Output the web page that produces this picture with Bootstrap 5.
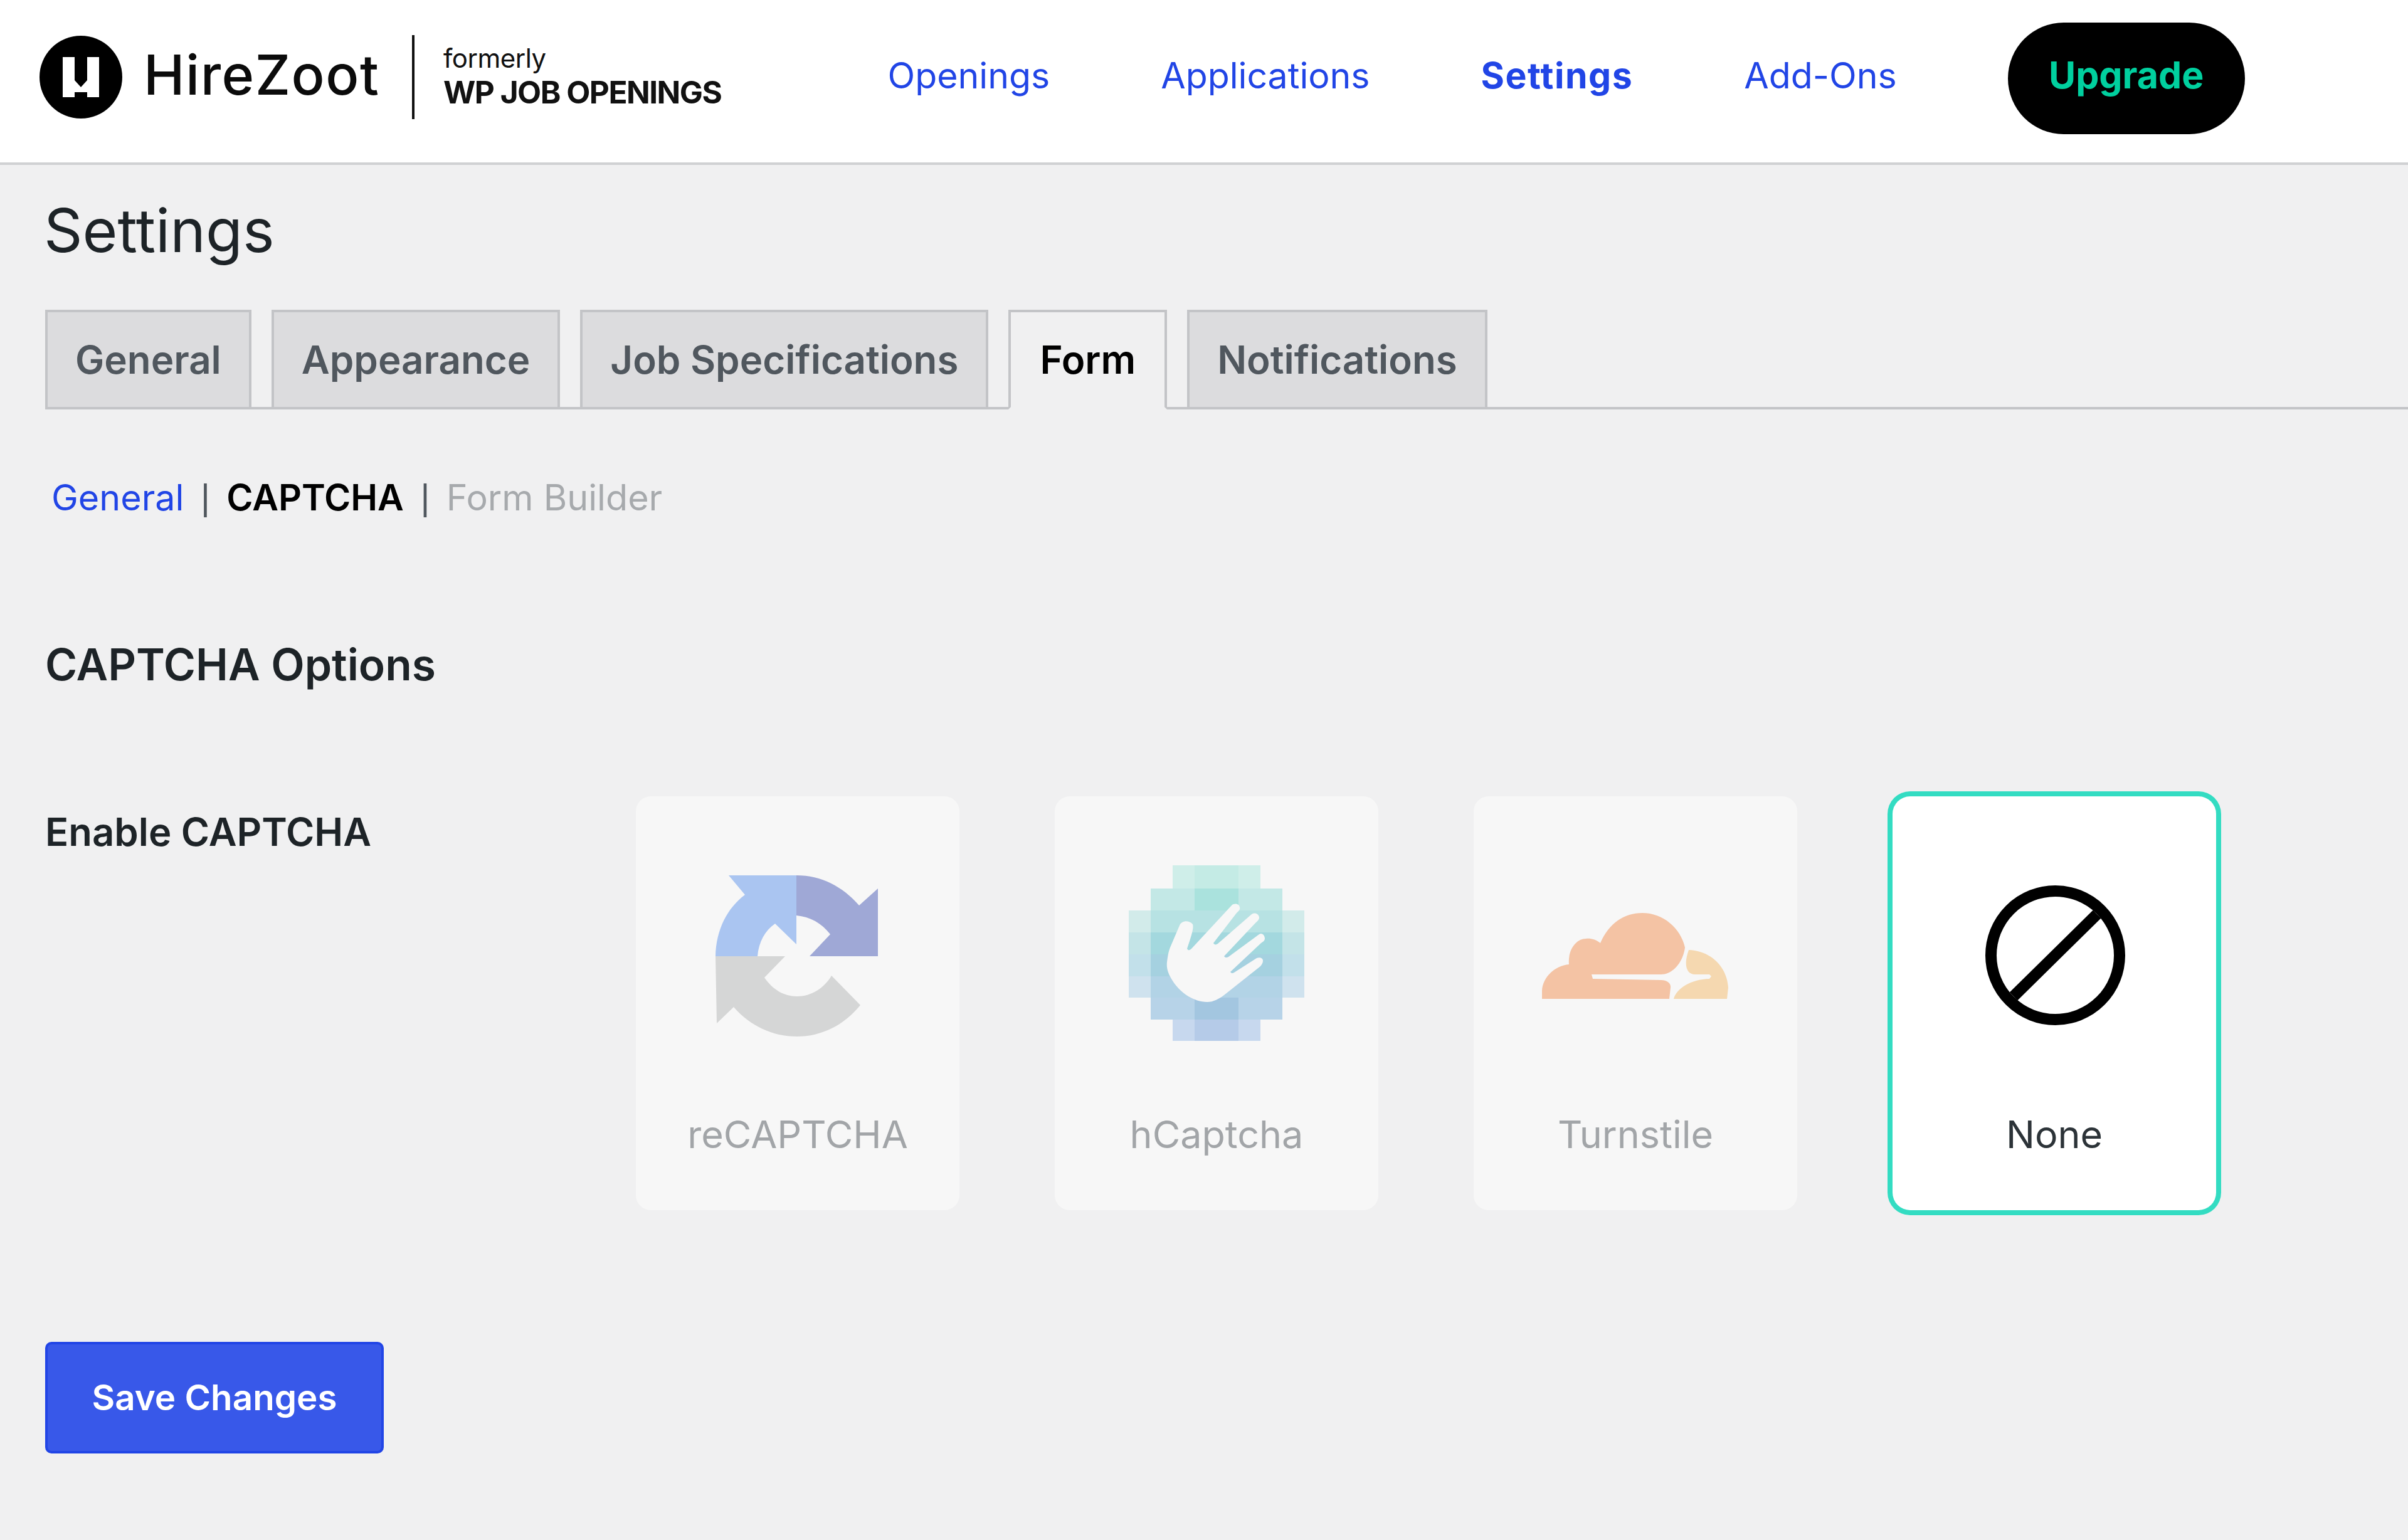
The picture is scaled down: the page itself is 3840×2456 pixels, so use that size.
<!doctype html>
<html lang="en">
<head>
<meta charset="utf-8">
<title>Settings</title>
<link href="https://cdn.jsdelivr.net/npm/bootstrap@5.3.0/dist/css/bootstrap.min.css" rel="stylesheet">
<style>
html,body{height:100%}
body{background:#f0f0f1;font-family:Inter,"Liberation Sans",sans-serif;color:#1d2327;margin:0}
.hz-top{height:263px;background:#fff;border-bottom:4px solid #d0d1d3;padding:0 0 14px 63px}
.hz-mark{width:132px;height:132px;flex:none}
.hz-name{font-size:88px;font-weight:500;color:#0b0b0b;margin:0 0 8px 34px;line-height:1;width:390px;letter-spacing:1.5px}
.hz-rule{width:4px;height:134px;background:#111;margin-left:38px;flex:none}
.hz-was{margin-left:46px;color:#111;line-height:1;white-space:nowrap}
.hz-was-a{font-size:42px;font-weight:400;margin-bottom:9px;letter-spacing:-.5px}
.hz-was-b{font-size:49.5px;font-weight:700;letter-spacing:-1.5px}
.hz-links{margin:0 0 4px 265px;gap:177px}
.hz-link{font-size:57.2px;color:#2145e6;text-decoration:none;font-weight:400;line-height:1;white-space:nowrap}
.hz-link.on{font-weight:700;letter-spacing:1.5px}
.hz-up{background:#000;color:#00d09f;font-size:59px;font-weight:700;width:378px;height:178px;border-radius:89px;margin:4px 0 0 177px;padding-bottom:8px;text-decoration:none;flex:none}
.hz-title{font-size:96px;font-weight:400;line-height:96px;margin:0;padding:56px 0 0 70px;color:#1d2327}
.hz-tabs{margin-top:79px;margin-left:72px;border-bottom:4px solid #c3c4c7;gap:32px;height:159px}
.hz-tab{height:159px;background:#dcdcde;border:4px solid #c3c4c7;color:#50575e;font-size:61.8px;font-weight:600;padding:0 44px;text-decoration:none;white-space:nowrap;line-height:1}
.hz-tab.on{background:#f0f0f1;color:#000;border-bottom-color:#f0f0f1;padding:0 46px}
.hz-sub{padding:105px 0 0 82px;font-size:57.4px;line-height:70px;gap:26.5px;white-space:nowrap}
.hz-sub a{color:#2145e6;text-decoration:none}
.hz-sub b{font-weight:600;color:#000}
.hz-sub i{font-style:normal;color:#a7aaad}
.hz-sub span{font-family:"Liberation Sans",sans-serif;color:#50575e}
.hz-h2{font-size:69.6px;font-weight:600;margin:0;padding:187px 0 0 72px;line-height:90px;color:#1d2327}
.hz-row{padding:165px 0 0 72px}
.hz-label{width:942px;font-size:61.6px;font-weight:600;line-height:80px;padding-top:17px;flex:none;color:#1d2327}
.hz-cards{gap:152px}
.hz-card{width:516px;height:660px;background:#f7f7f7;border-radius:24px;color:#a2a5a8;font-size:61px}
.hz-card.on{background:#fff;color:#2c3338;box-shadow:0 0 0 8px #33dcc2;border-radius:28px}
.hz-pic{height:280px;width:300px;margin-top:110px}
.hz-cap{margin-top:114px;line-height:70px}
.hz-foot{padding:210px 0 0 72px}
.hz-save{width:540px;height:178px;background:#3858e9;border:4px solid #2145e6;border-radius:10px;color:#fff;font-size:56.5px;font-weight:600;padding:0}
.hz-save:hover{background:#3858e9;border-color:#2145e6;color:#fff}
</style>
</head>
<body>
<header class="hz-top d-flex align-items-center">
  <svg class="hz-mark" viewBox="0 0 132 132"><circle cx="66" cy="66" r="66" fill="#000"/><path d="M37 34H56V71L66 82L76 71V34H95V98H76V90H56V98H37Z" fill="#fff"/></svg>
  <div class="hz-name">HireZoot</div>
  <div class="hz-rule"></div>
  <div class="hz-was"><div class="hz-was-a">formerly</div><div class="hz-was-b">WP JOB OPENINGS</div></div>
  <nav class="hz-links d-flex align-items-center">
    <a class="hz-link" href="#">Openings</a>
    <a class="hz-link" href="#">Applications</a>
    <a class="hz-link on" href="#">Settings</a>
    <a class="hz-link" href="#">Add-Ons</a>
  </nav>
  <a class="hz-up d-flex align-items-center justify-content-center" href="#">Upgrade</a>
</header>
<h1 class="hz-title">Settings</h1>
<div class="hz-tabs d-flex">
  <a class="hz-tab d-flex align-items-center" href="#">General</a>
  <a class="hz-tab d-flex align-items-center" href="#">Appearance</a>
  <a class="hz-tab d-flex align-items-center" href="#">Job Specifications</a>
  <a class="hz-tab on d-flex align-items-center" href="#">Form</a>
  <a class="hz-tab d-flex align-items-center" href="#">Notifications</a>
</div>
<div class="hz-sub d-flex"><a href="#">General</a><span>|</span><b>CAPTCHA</b><span>|</span><i>Form Builder</i></div>
<h2 class="hz-h2">CAPTCHA Options</h2>
<div class="hz-row d-flex">
  <div class="hz-label">Enable CAPTCHA</div>
  <div class="hz-cards d-flex">
    <div class="hz-card d-flex flex-column align-items-center">
      <svg class="hz-pic" viewBox="0 0 300 280">
        <path d="M40 16H148V126L114 93C98 104 88 122 86 145H19C20 102 38 68 66 47Z" fill="#aac5f1"/>
        <path d="M148 16C188 16 222 34 248 64L278 37V145H169L202 110C188 92 170 82 148 80Z" fill="#9fa8d6"/>
        <path d="M19 145H130L97 179C110 198 128 209 149 209C172 209 192 196 204 176L250 223C224 255 188 273 149 273C110 273 74 256 48 226L21 252Z" fill="#d5d6d6"/>
      </svg>
      <div class="hz-cap">reCAPTCHA</div>
    </div>
    <div class="hz-card d-flex flex-column align-items-center">
      <svg class="hz-pic" viewBox="-10 0 300 280">
        <rect x="70" y="0" width="140" height="37" fill="#cfeee9"/>
        <rect x="105" y="0" width="70" height="37" fill="#c4ebe5"/>
        <rect x="35" y="37" width="210" height="35" fill="#c3e8e6"/>
        <rect x="105" y="37" width="70" height="35" fill="#aae2dd"/>
        <rect x="0" y="72" width="280" height="35" fill="#d2ebea"/>
        <rect x="35" y="72" width="210" height="35" fill="#b7e2e3"/>
        <rect x="0" y="107" width="280" height="35" fill="#c4e4e7"/>
        <rect x="35" y="107" width="210" height="35" fill="#a3d8de"/>
        <rect x="0" y="142" width="280" height="35" fill="#c2e0ea"/>
        <rect x="35" y="142" width="210" height="35" fill="#a5d1e0"/>
        <rect x="0" y="177" width="280" height="34" fill="#cfe2ee"/>
        <rect x="35" y="177" width="210" height="34" fill="#b2d3e6"/>
        <rect x="35" y="211" width="210" height="35" fill="#b7d3e8"/>
        <rect x="105" y="211" width="70" height="35" fill="#a3c6e0"/>
        <rect x="70" y="246" width="140" height="35" fill="#c7d8ee"/>
        <rect x="105" y="246" width="70" height="35" fill="#b5cbe8"/>
        <path d="M81 96C84 88 96 87 102 94C104 100 100 112 93 133C95 137 98 135 100 133L164 64C168 60 176 61 177 67C178 71 175 73 172 76L135 124C137 128 140 126 142 125L196 78C201 75 207 77 208 83C208 87 205 89 202 92L152 145C154 148 157 147 159 146L208 110C213 107 217 112 217 117C217 120 214 122 211 124L162 170C164 173 166 172 168 171L204 148C209 146 214 148 214 152C214 156 212 158 210 161L152 207C144 213 135 218 125 218C114 218 104 214 95 209C84 202 74 192 68 181C62 171 60 163 61 154C62 146 63 139 66 131Z" fill="#f7f7f7"/>
      </svg>
      <div class="hz-cap">hCaptcha</div>
    </div>
    <div class="hz-card d-flex flex-column align-items-center">
      <svg class="hz-pic" viewBox="0 0 300 280">
        <path d="M1 213V200C2 178 22 160 44 158C42 134 56 117 71 117C80 116 88 119 94 124C108 92 132 76 161 76C194 76 222 100 229 131C226 154 210 174 191 174H80L82 181L191 183C200 183 207 188 206 195L204 213Z" fill="#f4c3a4"/>
        <path d="M211 213C216 196 238 182 268 181L271 177L268 174H245C232 174 226 160 235 135C270 136 296 162 298 195L296 213Z" fill="#f5d8b0"/>
      </svg>
      <div class="hz-cap">Turnstile</div>
    </div>
    <div class="hz-card on d-flex flex-column align-items-center">
      <svg class="hz-pic" viewBox="0 0 300 280"><circle cx="151.500" cy="143.500" r="102.500" fill="none" stroke="#000" stroke-width="18"/><path d="M218 78 85 209" stroke="#000" stroke-width="18"/></svg>
      <div class="hz-cap">None</div>
    </div>
  </div>
</div>
<div class="hz-foot"><button class="btn hz-save" type="button">Save Changes</button></div>
<script src="https://cdn.jsdelivr.net/npm/bootstrap@5.3.0/dist/js/bootstrap.bundle.min.js"></script>
</body>
</html>
